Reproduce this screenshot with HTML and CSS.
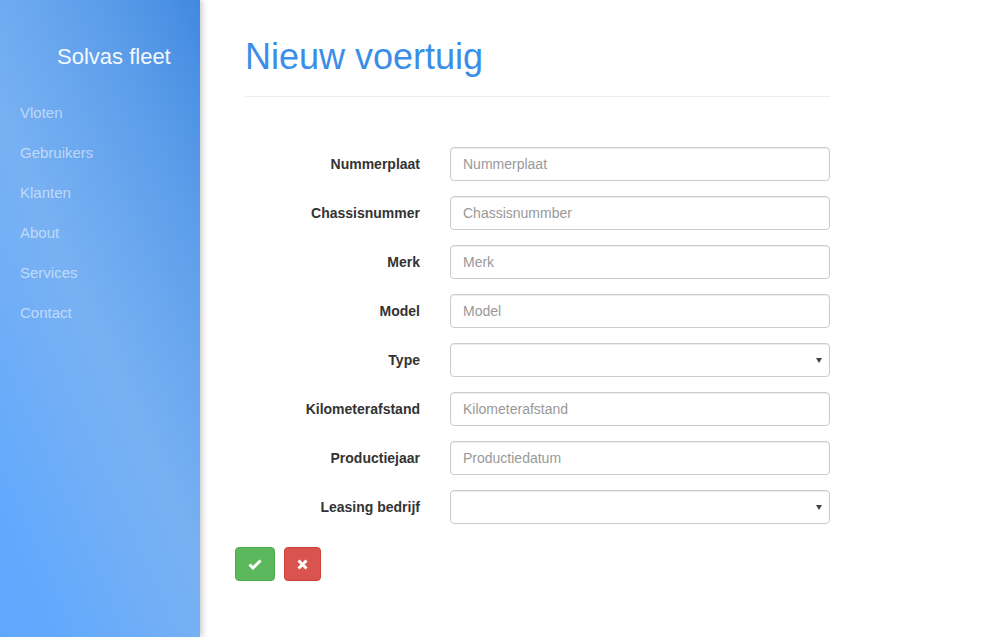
FILE: index.html
```html
<!DOCTYPE html>
<html lang="nl">
<head>
<meta charset="utf-8">
<title>Nieuw voertuig</title>
<link rel="stylesheet" href="styles.css">
</head>
<body>
<div class="layout">
  <aside class="sidebar">
    <div class="brand">Solvas fleet</div>
    <ul class="nav">
      <li><a href="#">Vloten</a></li>
      <li><a href="#">Gebruikers</a></li>
      <li><a href="#">Klanten</a></li>
      <li><a href="#">About</a></li>
      <li><a href="#">Services</a></li>
      <li><a href="#">Contact</a></li>
    </ul>
  </aside>
  <main class="content">
    <h1 class="page-header">Nieuw voertuig</h1>
    <form class="form">
      <label class="label" for="f1">Nummerplaat</label>
      <input class="control" id="f1" type="text" placeholder="Nummerplaat">
      <label class="label" for="f2">Chassisnummer</label>
      <input class="control" id="f2" type="text" placeholder="Chassisnummber">
      <label class="label" for="f3">Merk</label>
      <input class="control" id="f3" type="text" placeholder="Merk">
      <label class="label" for="f4">Model</label>
      <input class="control" id="f4" type="text" placeholder="Model">
      <label class="label" for="f5">Type</label>
      <span class="select-wrap"><select class="control select" id="f5"><option></option></select></span>
      <label class="label" for="f6">Kilometerafstand</label>
      <input class="control" id="f6" type="text" placeholder="Kilometerafstand">
      <label class="label" for="f7">Productiejaar</label>
      <input class="control" id="f7" type="text" placeholder="Productiedatum">
      <label class="label" for="f8">Leasing bedrijf</label>
      <span class="select-wrap"><select class="control select" id="f8"><option></option></select></span>
    </form>
    <div class="actions">
      <button class="btn btn-ok" type="button" aria-label="Opslaan">
        <svg width="14" height="11" viewBox="0 0 14 11"><path d="M1.5 5.5 L5 9 L12.5 1.5" fill="none" stroke="#fff" stroke-width="3"/></svg>
      </button>
      <button class="btn btn-cancel" type="button" aria-label="Annuleren">
        <svg width="11" height="11" viewBox="0 0 11 11"><path d="M1.5 1.5 L9.5 9.5 M9.5 1.5 L1.5 9.5" fill="none" stroke="#fff" stroke-width="3"/></svg>
      </button>
    </div>
  </main>
</div>
</body>
</html>
```
FILE: styles.css
```css
* { box-sizing: border-box; }
html, body { margin: 0; padding: 0; height: 100%; }
body {
  font-family: "Liberation Sans", Arial, Helvetica, sans-serif;
  font-size: 14px;
  color: #333;
  background: #fff;
}
.layout { display: flex; min-height: 100%; }
.sidebar {
  width: 200px;
  flex: 0 0 200px;
  min-height: 637px;
  background: linear-gradient(246deg, #4189e0 0%, #5d9eea 22%, #78b1f3 52%, #74aff5 62%, #62a9fd 88%, #60a8ff 100%);
  box-shadow: 2px 0 6px rgba(0,0,0,0.22);
  position: relative;
  z-index: 1;
}
.brand {
  margin-top: 42px;
  padding-left: 57px;
  font-size: 22px;
  line-height: 30px;
  color: #f4f8fe;
}
.nav { list-style: none; margin: 21px 0 0; padding: 0; }
.nav a {
  display: block;
  padding-left: 20px;
  line-height: 40px;
  font-size: 15px;
  color: rgba(255,255,255,0.55);
  text-decoration: none;
}
.content { padding: 37px 0 0 45px; }
.page-header {
  width: 585px;
  margin: 0;
  padding-bottom: 19px;
  border-bottom: 1px solid #eee;
  font-size: 36px;
  line-height: 40px;
  font-weight: normal;
  color: #3a8ee8;
}
.form {
  margin-top: 50px;
  display: grid;
  grid-template-columns: 175px 380px;
  column-gap: 30px;
  row-gap: 15px;
}
.label {
  align-self: center;
  text-align: right;
  font-weight: bold;
  line-height: 20px;
}
.control {
  display: block;
  width: 380px;
  height: 34px;
  padding: 6px 12px;
  font-family: inherit;
  font-size: 14px;
  color: #555;
  background: #fff;
  border: 1px solid #ccc;
  border-radius: 4px;
  box-shadow: inset 0 1px 1px rgba(0,0,0,0.075);
}
.control::placeholder { color: #999; }
.select-wrap { position: relative; display: block; }
.select { appearance: none; -webkit-appearance: none; }
.select-wrap::after {
  content: "";
  position: absolute;
  right: 8px;
  top: 15px;
  border-left: 3px solid transparent;
  border-right: 3px solid transparent;
  border-top: 5px solid #444;
}
.actions {
  margin: 23px 0 0 -10px;
  display: flex;
  gap: 9px;
}
.btn {
  height: 34px;
  padding: 0 12px;
  border-radius: 4px;
  border: 1px solid;
  display: flex;
  align-items: center;
  justify-content: center;
}
.btn-ok { width: 40px; background: #5cb85c; border-color: #4cae4c; }
.btn-cancel { width: 37px; background: #d9534f; border-color: #d43f3a; }
```
